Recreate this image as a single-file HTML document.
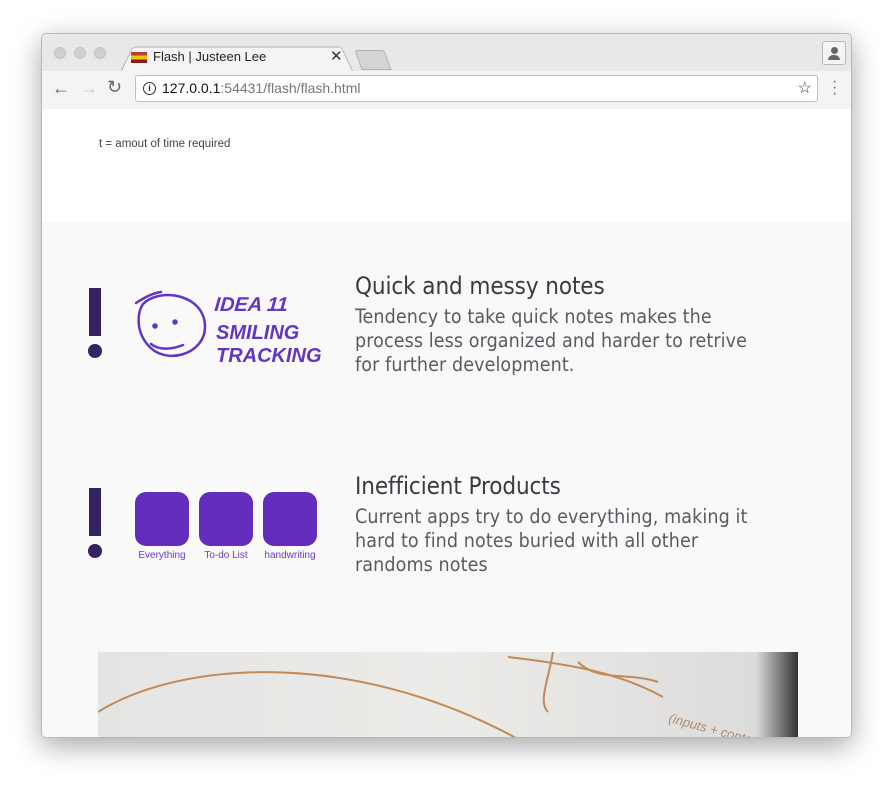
<!DOCTYPE html>
<html><head><meta charset="utf-8"><style>
body{margin:0;width:894px;height:788px;background:#fff;position:relative;overflow:hidden;font-family:"Liberation Sans",sans-serif}
.win{position:absolute;left:41px;top:33px;width:811px;height:705px;border-radius:5px;overflow:hidden;box-shadow:0 8px 28px rgba(0,0,0,.35);background:#fff;border:1px solid #b8b8b8;box-sizing:border-box}
.tabbar{position:absolute;left:0;top:0;width:100%;height:37px;background:#e8e8e8}
.dot{position:absolute;top:13px;width:12px;height:12px;border-radius:50%;background:#d0d0d0;border:1px solid #c4c4c4;box-sizing:border-box}
.tab{position:absolute;left:78px;top:8px;width:232px;height:30px;background:#f4f4f4;border:1px solid #b0b0b0;border-bottom:none;transform:perspective(80px) rotateX(18deg);transform-origin:bottom;border-radius:4px 4px 0 0}
.toolbar{position:absolute;left:0;top:37px;width:100%;height:38px;background:#f4f4f4;border-bottom:1px solid #b8b8b8}
.url{position:absolute;left:93px;top:4px;width:683px;height:27px;background:#fff;border:1px solid #c0c0c0;border-radius:3px;box-sizing:border-box;font-size:14px;line-height:25px;padding-left:26px;color:#767676}
.page{position:absolute;left:0;top:75px;width:100%;height:630px;background:#fff}
.gray{position:absolute;left:0;top:113px;width:100%;height:517px;background:#f9f9f9}
h2{position:absolute;margin:0;font-weight:normal;font-size:24px;color:#3a3a40;font-family:"DejaVu Sans Condensed","Liberation Sans",sans-serif;letter-spacing:-0.1px}
p.d{position:absolute;margin:0;font-size:19.5px;line-height:24px;color:#5a5a60;font-family:"DejaVu Sans Condensed","Liberation Sans",sans-serif;width:410px;letter-spacing:0.1px}
.ex{position:absolute;width:14px}
.ex .bar{width:12px;height:48px;background:#33235f;margin:0 auto}
.ex .c{width:14px;height:14px;border-radius:50%;background:#33235f;margin-top:8px}
.sq{position:absolute;width:54px;height:54px;border-radius:11px;background:#622cbd}
.lb{position:absolute;font-size:10px;color:#6a3dc7;width:70px;text-align:center}
</style></head><body>
<div class="win">
<div class="tabbar">
<div class="dot" style="left:12px"></div><div class="dot" style="left:32px"></div><div class="dot" style="left:52px"></div>
<div class="tab"></div>
<div style="position:absolute;left:89px;top:18px;width:16px;height:11px;background:linear-gradient(#c0392b 0 33%,#f1c40f 33% 66%,#8b1a1a 66%)"></div>
<div style="position:absolute;left:111px;top:15px;font-size:13px;color:#222">Flash | Justeen Lee</div>
<div style="position:absolute;left:288px;top:13px;font-size:15px;color:#333">✕</div>
<div style="position:absolute;left:316px;top:16px;width:28px;height:18px;background:#d4d4d4;border:1px solid #b0b0b0;transform:skewX(20deg);border-radius:3px 3px 0 0"></div>
<div style="position:absolute;left:780px;top:7px;width:24px;height:24px;border:1px solid #b8b8b8;border-radius:3px;background:#f4f4f4;box-sizing:border-box"><div style="width:7px;height:7px;border-radius:50%;background:#666;margin:5px auto 0"></div><div style="width:12px;height:5px;border-radius:6px 6px 0 0;background:#666;margin:1px auto 0"></div></div>
</div>
<div class="toolbar">
<div style="position:absolute;left:10px;top:7px;font-size:18px;color:#666">←</div>
<div style="position:absolute;left:38px;top:7px;font-size:18px;color:#ccc">→</div>
<div style="position:absolute;left:65px;top:6px;font-size:18px;color:#666">↻</div>
<div class="url"><span style="position:absolute;left:7px;top:6px;width:11px;height:11px;border:1.5px solid #333;border-radius:50%;font-size:9px;line-height:11px;text-align:center;color:#333;font-weight:bold">i</span><span style="color:#111">127.0.0.1</span>:54431/flash/flash.html<span style="position:absolute;right:5px;top:0;color:#444;font-size:16px">☆</span></div>
<div style="position:absolute;left:790px;top:8px;font-size:16px;color:#666;line-height:6px">·<br>·<br>·</div>
</div>
<div class="page">
<div style="position:absolute;left:57px;top:29px;font-size:11.5px;color:#444">t = amout of time required</div>
<div class="gray"></div>
<div class="ex" style="left:46px;top:179px"><div class="bar"></div><div class="c"></div></div>
<svg style="position:absolute;left:93px;top:180px" width="190" height="80" viewBox="0 0 190 80"><g fill="none" stroke="#6236c4" stroke-width="2.5" stroke-linecap="round"><path d="M8 15 C25 -2 70 5 70 38 C70 65 30 78 12 55 C0 40 3 22 8 15 M1 14 C10 8 18 4 26 3"/><circle cx="20" cy="37" r="1.5" fill="#6236c4"/><circle cx="40" cy="33" r="1.5" fill="#6236c4"/><path d="M16 55 C25 62 38 60 48 56"/></g>
<g font-family="Liberation Sans" font-weight="bold" font-style="italic" fill="#6236c4"><text x="81" y="22" font-size="20" transform="skewX(-5)">IDEA 11</text><text x="81" y="50" font-size="20">SMILING</text><text x="81" y="73" font-size="20">TRACKING</text></g></svg>
<h2 style="left:313px;top:163px">Quick and messy notes</h2>
<p class="d" style="left:313px;top:196px">Tendency to take quick notes makes the process less organized and harder to retrive for further development.</p>
<div class="ex" style="left:46px;top:379px"><div class="bar"></div><div class="c"></div></div>
<div class="sq" style="left:93px;top:383px"></div><div class="sq" style="left:157px;top:383px"></div><div class="sq" style="left:221px;top:383px"></div>
<div class="lb" style="left:85px;top:441px">Everything</div><div class="lb" style="left:149px;top:441px">To-do List</div><div class="lb" style="left:213px;top:441px">handwriting</div>
<h2 style="left:313px;top:363px">Inefficient Products</h2>
<p class="d" style="left:313px;top:396px">Current apps try to do everything, making it hard to find notes buried with all other randoms notes</p>
<div style="position:absolute;left:56px;top:543px;width:700px;height:87px;background:linear-gradient(90deg,#e4e4e2,#ecebe8 50%,#dcdcda 94%,#333 100%);overflow:hidden">
<svg width="700" height="87"><g fill="none" stroke="#c08a5a" stroke-width="2"><path d="M0 60 C80 10 250 -5 420 87"/><path d="M410 5 C470 12 520 20 565 45"/><path d="M455 0 C450 30 440 50 450 60"/><path d="M480 10 C500 30 530 20 560 30"/></g><text x="570" y="70" font-size="13" fill="#b08a6a" font-style="italic" transform="rotate(15 570 70)">(inputs + context)</text></svg></div>
</div>
</div>
</body></html>
